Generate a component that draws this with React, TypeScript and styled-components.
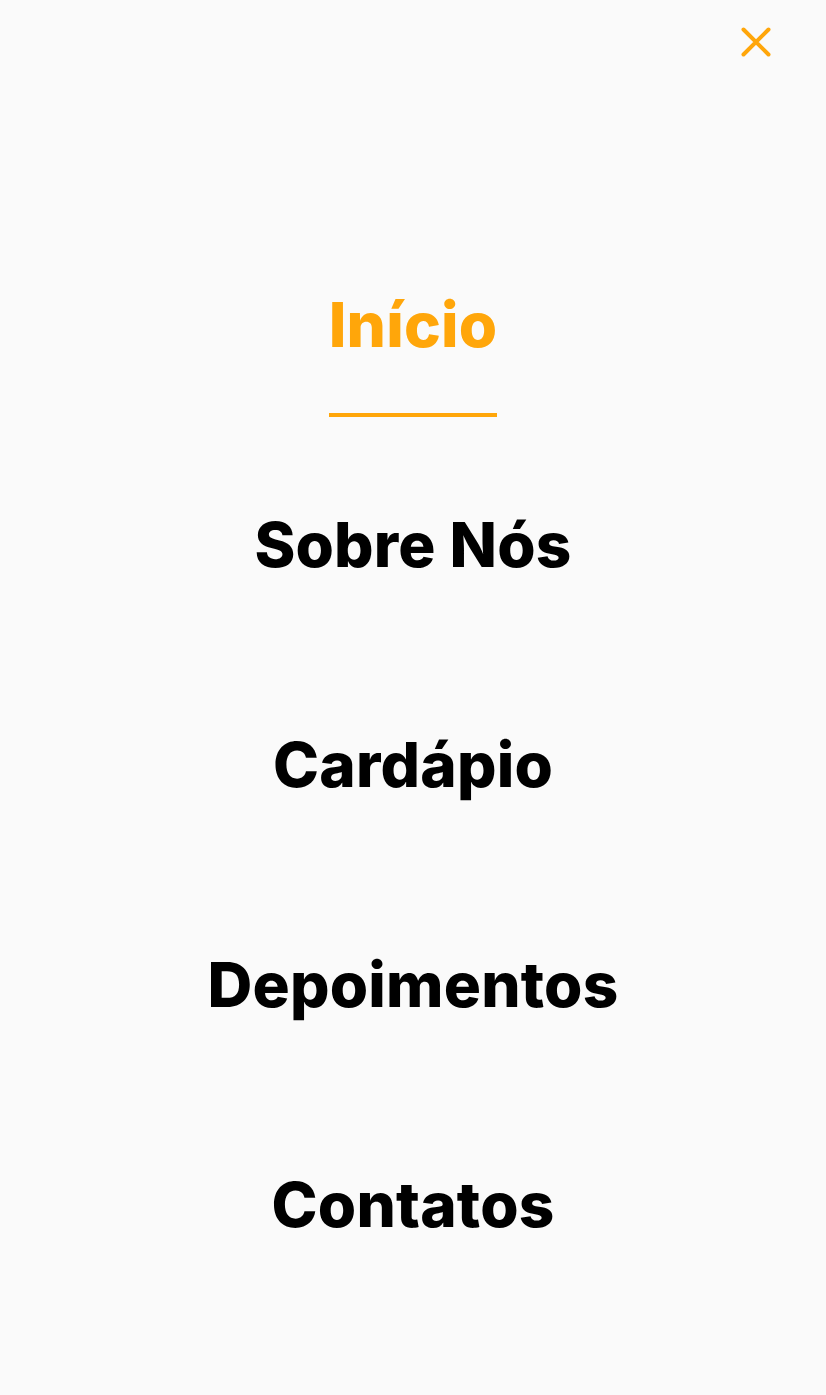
import React from "react";
import styled, { createGlobalStyle } from "styled-components";

const ACCENT = "#ffa60a";

const GlobalStyle = createGlobalStyle`
  html, body {
    margin: 0;
    padding: 0;
    background: #fafafa;
  }
  body {
    font-family: Inter, "Noto Sans", sans-serif;
  }
`;

const Page = styled.div`
  min-height: 1395px;
  background: #fafafa;
  display: flex;
  flex-direction: column;
`;

const TopBar = styled.header`
  display: flex;
  justify-content: flex-end;
  padding: 24px 52px 0 0;
`;

const CloseButton = styled.button`
  width: 36px;
  height: 36px;
  padding: 0;
  border: none;
  background: transparent;
  display: flex;
  align-items: center;
  justify-content: center;
  cursor: pointer;
`;

const Nav = styled.nav`
  display: flex;
  flex-direction: column;
  align-items: center;
  gap: 127px;
  padding-top: 218px;
`;

const NavLink = styled.a<{ $active?: boolean }>`
  font-family: Inter, "Noto Sans", sans-serif;
  font-weight: 800;
  font-size: 62px;
  line-height: 93px;
  color: ${(p) => (p.$active ? ACCENT : "#000")};
  text-decoration: none;
  letter-spacing: 0.2px;
  border-bottom: 4px solid ${(p) => (p.$active ? ACCENT : "transparent")};
  padding-bottom: 42px;
  margin-bottom: -46px;
`;

const items = ["Início", "Sobre Nós", "Cardápio", "Depoimentos", "Contatos"];

export default function App() {
  return (
    <Page>
      <GlobalStyle />
      <TopBar>
        <CloseButton aria-label="Fechar menu">
          <svg width="32" height="32" viewBox="0 0 32 32" fill="none">
            <path d="M3.5 3.5L28.5 28.5M28.5 3.5L3.5 28.5" stroke={ACCENT} strokeWidth="4" strokeLinecap="round" />
          </svg>
        </CloseButton>
      </TopBar>
      <Nav>
        {items.map((t, i) => (
          <NavLink key={t} href="#" $active={i === 0}>
            {t}
          </NavLink>
        ))}
      </Nav>
    </Page>
  );
}
